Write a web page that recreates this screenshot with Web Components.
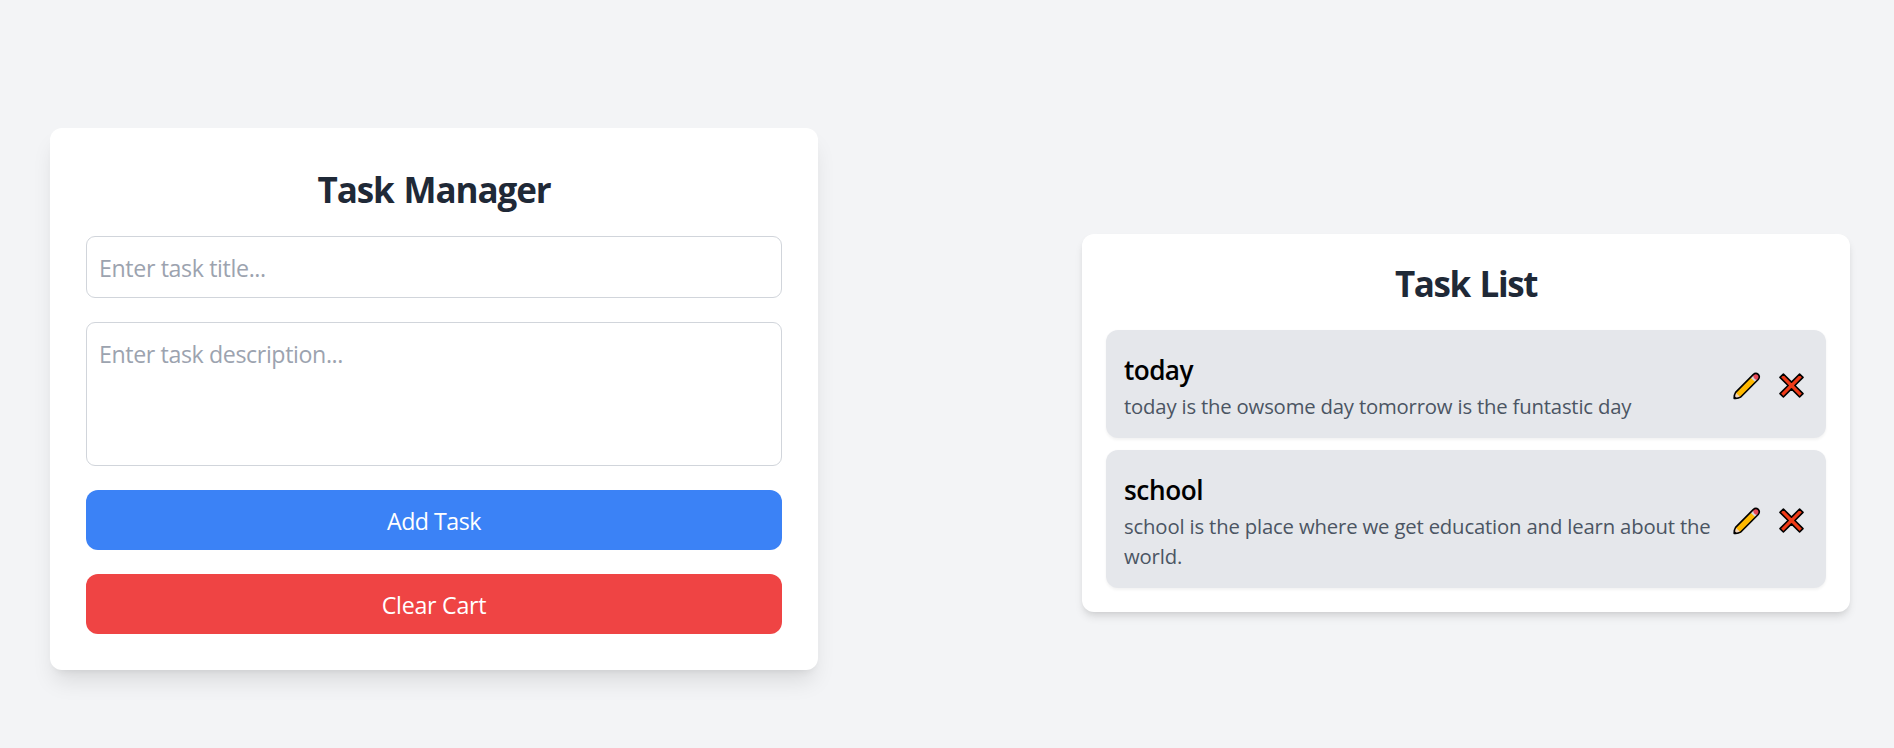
<!DOCTYPE html>
<html lang="en">
<head>
<meta charset="utf-8">
<title>Task Manager</title>
<style>
html, body { margin: 0; height: 100%; }
body { background: #f3f4f6; font-family: "Open Sans", "Noto Sans", sans-serif; font-size: 23.2px; line-height: 36px; }
</style>
</head>
<body>
<task-app>
  <task-card kind="form" heading="Task Manager" style="--heading-spacing:-1.1px">
    <task-field placeholder="Enter task title..." style="letter-spacing:-.37px"></task-field>
    <task-field multiline placeholder="Enter task description..." style="letter-spacing:-.39px"></task-field>
    <task-button style="letter-spacing:-.5px">Add Task</task-button>
    <task-button tone="danger" style="letter-spacing:-.25px">Clear Cart</task-button>
  </task-card>
  <task-card kind="list" heading="Task List" style="--heading-spacing:-1.4px">
    <task-item style="--title-spacing:-.6px;--text-spacing:-.18px"><span slot="title">today</span>today is the owsome day tomorrow is the funtastic day</task-item>
    <task-item style="--title-spacing:-.4px;--text-spacing:-.16px"><span slot="title">school</span>school is the place where we get education and learn about the world.</task-item>
  </task-card>
</task-app>
<script>
const define = (name, html, setup) => customElements.define(name, class extends HTMLElement {
  constructor() {
    super();
    const t = document.createElement('template');
    t.innerHTML = html;
    this.attachShadow({ mode: 'open' }).append(t.content.cloneNode(true));
  }
  connectedCallback() { if (setup) setup(this, this.shadowRoot); }
});

define('task-app', `<style>
:host { box-sizing: border-box; min-height: 748px; display: flex; justify-content: space-between; align-items: center; padding: 50px 44px 0 50px; }
</style><slot></slot>`);

define('task-card', `<style>
:host { box-sizing: border-box; width: 768px; display: flex; flex-direction: column; background: #fff; border-radius: 12px; }
:host([kind=form]) { padding: 36px; gap: 24px; box-shadow: 0 15px 22.5px -4.5px rgba(0,0,0,.1), 0 6px 9px -6px rgba(0,0,0,.1); }
:host([kind=list]) { padding: 24px; gap: 12px; margin-top: 48px; box-shadow: 0 6px 9px -1.5px rgba(0,0,0,.1), 0 3px 6px -3px rgba(0,0,0,.1); }
:host([kind=list]) h2 { margin-bottom: 12px; }
h2 { box-sizing: border-box; height: 48px; padding-top: 2px; margin: 0; text-align: center; font-size: 35px; line-height: 48px; font-weight: 700; color: #1f2937; letter-spacing: var(--heading-spacing); word-spacing: 2px; }
</style><h2></h2><slot></slot>`, (el, root) => { root.querySelector('h2').textContent = el.getAttribute('heading'); });

define('task-field', `<style>
:host { display: block; }
input, textarea { display: block; box-sizing: border-box; width: 100%; height: 62px; margin: 0; padding: 14px 12px 12px; border: 1px solid #d1d5db; border-radius: 9px; background: #fff; font: inherit; letter-spacing: inherit; resize: none; outline: none; }
textarea { height: 144px; padding-top: 13px; }
::placeholder { color: #9ca3af; opacity: 1; }
</style>`, (el, root) => {
  const f = document.createElement(el.hasAttribute('multiline') ? 'textarea' : 'input');
  f.placeholder = el.getAttribute('placeholder');
  root.append(f);
});

define('task-button', `<style>
:host { display: block; }
button { display: block; box-sizing: border-box; width: 100%; height: 60px; padding: 13px 12px 11px; border: 0; border-radius: 12px; background: #3b82f6; color: #fff; font: inherit; letter-spacing: inherit; }
:host([tone=danger]) button { background: #ef4444; }
</style><button><slot></slot></button>`);

define('task-item', `<style>
:host { box-sizing: border-box; display: flex; justify-content: space-between; align-items: center; padding: 19px 18px 17px; border-radius: 12px; background: #e5e7eb; box-shadow: 0 1.5px 3px rgba(0,0,0,.05); }
.text { width: 595px; }
h3 { margin: 0; font-size: 26.2px; line-height: 42px; font-weight: 600; color: #000; letter-spacing: var(--title-spacing); }
p { margin: 0; font-size: 20.3px; line-height: 30px; color: #4b5563; letter-spacing: var(--text-spacing); }
.actions { display: flex; align-items: center; gap: 18px; margin: 1px 4px 0 0; }
svg { display: block; }
</style>
<div class="text"><h3><slot name="title"></slot></h3><p><slot></slot></p></div>
<div class="actions">
<svg width="28" height="28" viewBox="0 0 28 28"><path d="M1.2 26.4Q1 23 2.6 20.4L20.2 2.6Q22.8 .4 25.2 2.4 27.4 4.8 25.2 7.5L7.5 25.2Q5 26.8 1.2 26.4Z" fill="#ffb900"/><path d="M1.2 26.4Q1 23 2.6 20.4L7.5 25.2Q5 26.8 1.2 26.4Z" fill="#f3d5ba"/><path d="M17.4 5.4 20.2 2.6 25.2 7.5 22.4 10.3Z" fill="#d8d8d8"/><path d="M20.2 2.6Q22.8 .4 25.2 2.4 27.4 4.8 25.2 7.5L24.4 8Q20 7.6 20.2 2.6Z" fill="#e74856"/><path d="M1.2 26.4Q1 23 2.6 20.4L20.2 2.6Q22.8 .4 25.2 2.4 27.4 4.8 25.2 7.5L7.5 25.2Q5 26.8 1.2 26.4Z" fill="none" stroke="#000" stroke-width="1.6" stroke-linejoin="round"/><path d="m1 23.6 3.2 3L1 27Z"/></svg>
<svg width="25" height="25" viewBox="0 0 25 25"><path d="m4.4 1 8.1 8.1L20.6 1 24 4.4l-8.1 8.1 8.1 8.1-3.4 3.4-8.1-8.1L4.4 24 1 20.6l8.1-8.1L1 4.4Z" fill="#f03a17" stroke="#000" stroke-width="1.6" stroke-linejoin="round"/></svg>
</div>`);
</script>
</body>
</html>
